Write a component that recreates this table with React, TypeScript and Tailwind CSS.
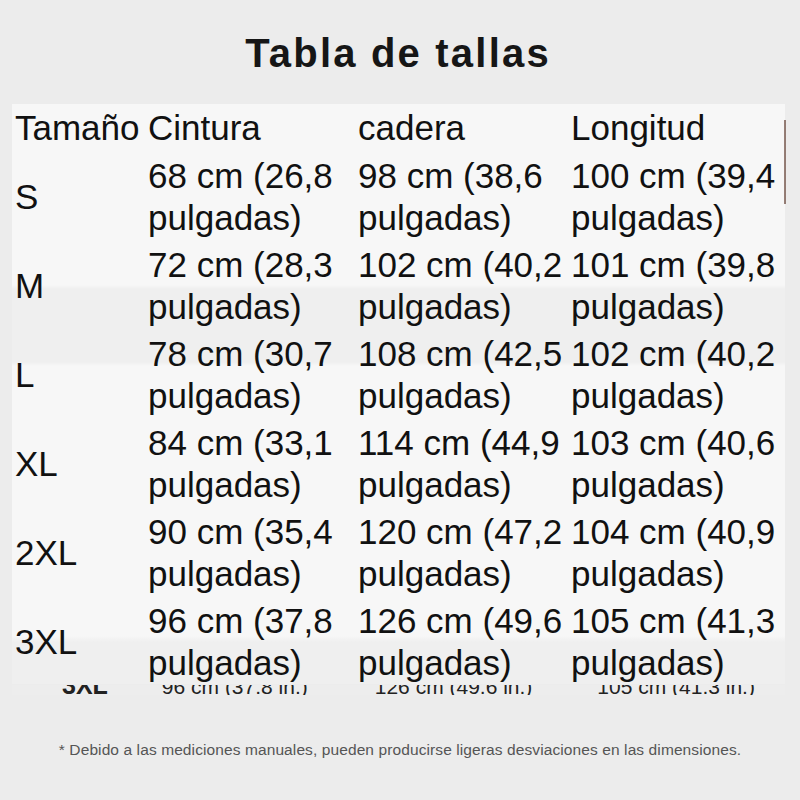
import React from "react";

const rows = [
  { size: "S", c: ["68 cm (26,8", "98 cm (38,6", "100 cm (39,4"] },
  { size: "M", c: ["72 cm (28,3", "102 cm (40,2", "101 cm (39,8"] },
  { size: "L", c: ["78 cm (30,7", "108 cm (42,5", "102 cm (40,2"] },
  { size: "XL", c: ["84 cm (33,1", "114 cm (44,9", "103 cm (40,6"] },
  { size: "2XL", c: ["90 cm (35,4", "120 cm (47,2", "104 cm (40,9"] },
  { size: "3XL", c: ["96 cm (37,8", "126 cm (49,6", "105 cm (41,3"] },
];

function Cell({ first }: { first: string }) {
  return (
    <div className="flex flex-col whitespace-nowrap pt-[5px]">
      <span className="leading-[42px]">{first}</span>
      <span className="leading-[42px]">pulgadas)</span>
    </div>
  );
}

export default function App() {
  return (
    <div
      className="w-[800px] h-[800px] bg-[#ececec] flex flex-col text-[#111]"
      style={{ fontFamily: "'Liberation Sans', Arial, sans-serif" }}
    >
      <div className="h-[104px] flex items-start justify-center pt-[32px]">
        <h1 className="text-[40px] leading-[42px] font-bold tracking-[2.2px] text-[#161616] mr-[4px]">
          Tabla de tallas
        </h1>
      </div>

      <div className="relative ml-[12px] w-[773px] bg-[linear-gradient(to_bottom,#f7f7f7_0px,#f7f7f7_181px,#efefef_185px,#efefef_258px,#f7f7f7_262px,#f7f7f7_532px,#efefef_538px,#efefef_578px)]">
        <div className="absolute right-[-1px] top-[16px] h-[84px] w-[2px] bg-[#6b4a3e] opacity-70" />
        <div className="grid grid-cols-[133px_210px_213px_1fr] pl-[3px] text-[35px] text-[#111]">
          <div className="h-[46px] leading-[47px] whitespace-nowrap">Tamaño</div>
          <div className="h-[46px] leading-[47px]">Cintura</div>
          <div className="h-[46px] leading-[47px]">cadera</div>
          <div className="h-[46px] leading-[47px]">Longitud</div>
          {rows.map((r) => (
            <React.Fragment key={r.size}>
              <div className="h-[88.6px] flex items-center pt-[6px]">{r.size}</div>
              <Cell first={r.c[0]} />
              <Cell first={r.c[1]} />
              <Cell first={r.c[2]} />
            </React.Fragment>
          ))}
        </div>
      </div>

      <div className="mt-[1px] h-[10px] overflow-hidden flex items-end text-[#222] ml-[12px] w-[773px] bg-[#ededed]">
        <span className="ml-[50px] text-[25px] leading-[25px] font-bold mb-[-3px] whitespace-nowrap">3XL</span>
        <span className="ml-[54px] text-[21px] leading-[21px] mb-[-2px] whitespace-nowrap">96 cm (37.8 in.)</span>
        <span className="ml-[67px] text-[21px] leading-[21px] mb-[-2px] whitespace-nowrap">126 cm (49.6 in.)</span>
        <span className="ml-[65px] text-[21px] leading-[21px] mb-[-2px] whitespace-nowrap">105 cm (41.3 in.)</span>
      </div>

      <div className="mt-[45px] text-center text-[15.5px] tracking-[0.1px] leading-[20px] text-[#555]">
        * Debido a las mediciones manuales, pueden producirse ligeras desviaciones en las dimensiones.
      </div>
    </div>
  );
}
